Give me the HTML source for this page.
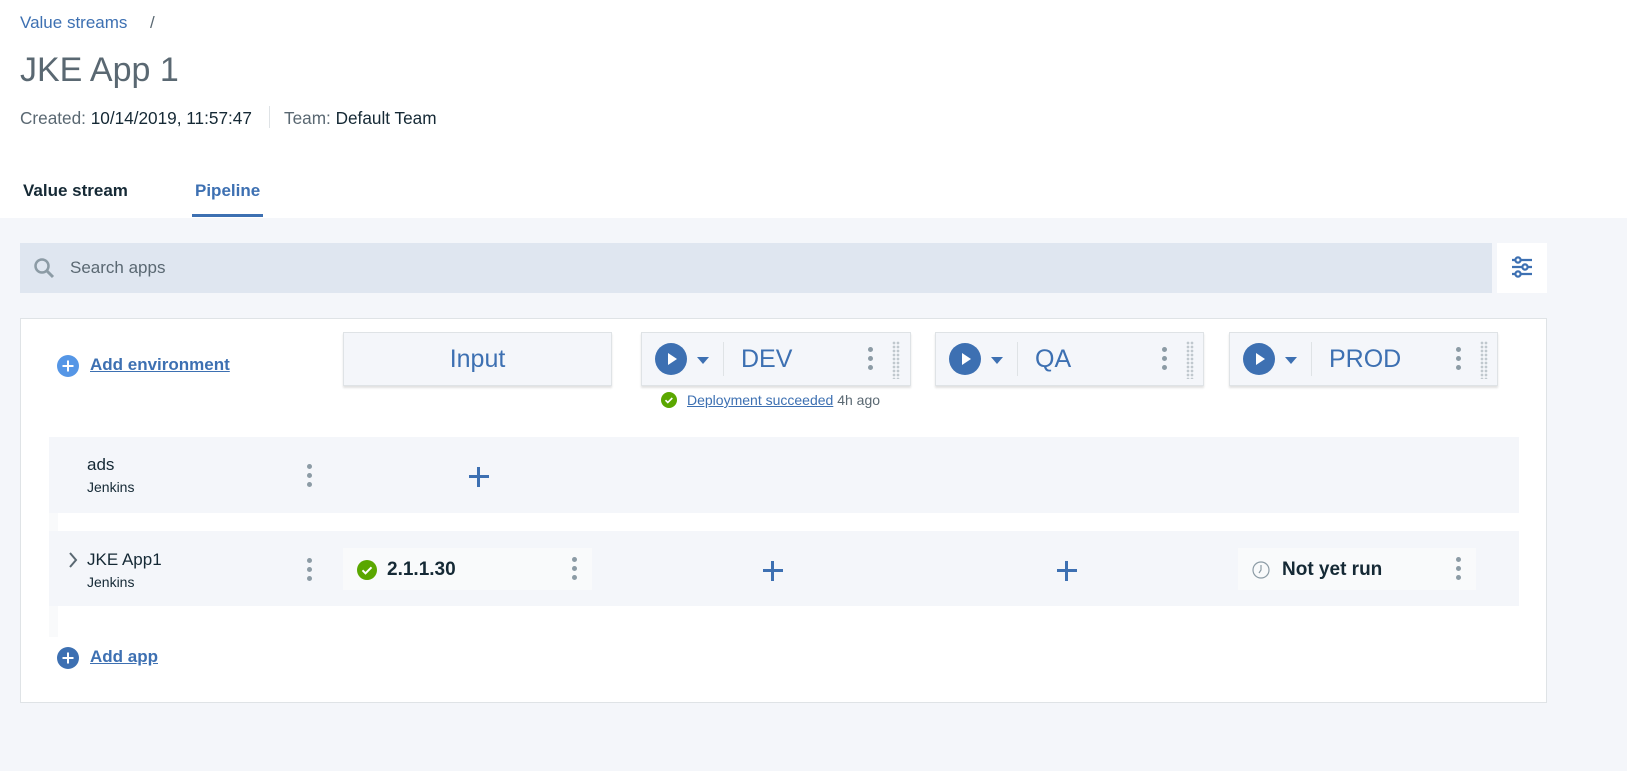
<!DOCTYPE html>
<html><head><meta charset="utf-8"><style>
*{box-sizing:border-box;margin:0;padding:0}
body{width:1627px;height:771px;background:#f4f6fa;font-family:"Liberation Sans",Arial,sans-serif;position:relative;overflow:hidden;color:#152935}
.abs{position:absolute}
#hdr{left:0;top:0;width:1627px;height:218px;background:#fff}
.blue{color:#3d70b2}
.card{position:absolute;background:#f4f6fa;border:1px solid #dfe3e6;box-shadow:0 2px 2px rgba(0,0,0,.12)}
.kebab{position:absolute;width:5px}
.kebab i{display:block;width:5px;height:5px;border-radius:50%;background:#8c9ba5;margin-bottom:4px}
.grip{position:absolute;width:8px;height:38px;background-image:radial-gradient(#c0c8ce 45%,transparent 50%);background-size:4px 4px}
.play{position:absolute;width:32px;height:32px;border-radius:50%;background:#3d70b2}
.play:after{content:"";position:absolute;left:13px;top:10px;border-left:9px solid #fff;border-top:6px solid transparent;border-bottom:6px solid transparent}
.caret{position:absolute;border-top:7px solid #3d70b2;border-left:6px solid transparent;border-right:6px solid transparent}
.sep{position:absolute;width:1px;height:34px;background:#dfe3e6}
.envname{position:absolute;font-size:25px;color:#3d70b2}
.plus{position:absolute;width:20px;height:20px}
.plus:before{content:"";position:absolute;left:8px;top:0;width:3px;height:20px;background:#3d70b2}
.plus:after{content:"";position:absolute;left:0;top:8px;width:20px;height:3px;background:#3d70b2}
.row{position:absolute;left:49px;width:1470px;background:#f4f6fa}
</style></head><body>
<div id="hdr" class="abs"></div>
<div class="abs blue" style="left:20px;top:13px;font-size:17px">Value streams</div>
<div class="abs" style="left:150px;top:13px;font-size:17px;color:#5a6872">/</div>
<div class="abs" style="left:20px;top:51px;font-size:34px;color:#5a6872">JKE App 1</div>
<div class="abs" style="left:20px;top:108px;font-size:17.2px;color:#5a6872">Created: <span style="color:#152935">10/14/2019, 11:57:47</span></div>
<div class="abs" style="left:269px;top:106px;width:1px;height:22px;background:#dfe3e6"></div>
<div class="abs" style="left:284px;top:108px;font-size:17.2px;color:#5a6872">Team: <span style="color:#152935">Default Team</span></div>
<div class="abs" style="left:23px;top:181px;font-size:17px;font-weight:bold;color:#152935">Value stream</div>
<div class="abs blue" style="left:195px;top:181px;font-size:17px;font-weight:bold">Pipeline</div>
<div class="abs" style="left:192px;top:214px;width:71px;height:3px;background:#3d70b2"></div>

<div class="abs" style="left:20px;top:243px;width:1472px;height:50px;background:#dfe6f0"></div>
<svg class="abs" style="left:33px;top:257px" width="24" height="24" viewBox="0 0 24 24"><circle cx="9" cy="9" r="6.5" fill="none" stroke="#8c9ba5" stroke-width="2.5"/><path d="M14 14l6 6" stroke="#8c9ba5" stroke-width="3"/></svg>
<div class="abs" style="left:70px;top:258px;font-size:17px;color:#5a6872">Search apps</div>
<div class="abs" style="left:1497px;top:243px;width:50px;height:50px;background:#fff"></div>
<svg class="abs" style="left:1511px;top:256px" width="22" height="22" viewBox="0 0 22 22" fill="none" stroke="#3d70b2" stroke-width="2.2"><path d="M1 4h20M1 11h20M1 18h20"/><circle cx="7" cy="4" r="2.6" fill="#fff"/><circle cx="14" cy="11" r="2.6" fill="#fff"/><circle cx="7" cy="18" r="2.6" fill="#fff"/></svg>

<div class="abs" style="left:20px;top:318px;width:1527px;height:385px;background:#fff;border:1px solid #dfe3e6"></div>
<svg class="abs" style="left:57px;top:355px" width="22" height="22" viewBox="0 0 22 22"><circle cx="11" cy="11" r="11" fill="#5596e6"/><path d="M11 5.5v11M5.5 11h11" stroke="#fff" stroke-width="2"/></svg>
<div class="abs blue" style="left:90px;top:355px;font-size:17px;font-weight:bold;text-decoration:underline">Add environment</div>

<div class="card" style="left:343px;top:332px;width:269px;height:54px"><div style="text-align:center;font-size:25px;color:#3d70b2;line-height:52px">Input</div></div>

<div class="card" style="left:641px;top:332px;width:270px;height:54px"><div class="play" style="left:13px;top:10px"></div><div class="caret" style="left:55px;top:24px"></div><div class="sep" style="left:81px;top:9px"></div><div class="envname" style="left:99px;top:12px">DEV</div><div class="kebab" style="left:226px;top:14px"><i></i><i></i><i></i></div><div class="grip" style="left:250px;top:8px"></div></div>
<div class="card" style="left:935px;top:332px;width:269px;height:54px"><div class="play" style="left:13px;top:10px"></div><div class="caret" style="left:55px;top:24px"></div><div class="sep" style="left:81px;top:9px"></div><div class="envname" style="left:99px;top:12px">QA</div><div class="kebab" style="left:226px;top:14px"><i></i><i></i><i></i></div><div class="grip" style="left:250px;top:8px"></div></div>
<div class="card" style="left:1229px;top:332px;width:269px;height:54px"><div class="play" style="left:13px;top:10px"></div><div class="caret" style="left:55px;top:24px"></div><div class="sep" style="left:81px;top:9px"></div><div class="envname" style="left:99px;top:12px">PROD</div><div class="kebab" style="left:226px;top:14px"><i></i><i></i><i></i></div><div class="grip" style="left:250px;top:8px"></div></div>

<svg class="abs" style="left:661px;top:392px" width="16" height="16" viewBox="0 0 16 16"><circle cx="8" cy="8" r="8" fill="#5aa700"/><path d="M4.5 8.2l2.3 2.3 4.5-4.5" stroke="#fff" stroke-width="1.6" fill="none"/></svg>
<div class="abs" style="left:687px;top:392px;font-size:14px;color:#5a6872"><span class="blue" style="text-decoration:underline">Deployment succeeded</span> 4h ago</div>

<div class="abs" style="left:49px;top:437px;width:9px;height:200px;background:#f9fafb"></div>
<div class="row" style="top:437px;height:76px"></div>
<div class="row" style="top:531px;height:75px"></div>
<div class="abs" style="left:87px;top:455px;font-size:17px">ads</div>
<div class="abs" style="left:87px;top:479px;font-size:14px">Jenkins</div>
<div class="kebab" style="left:307px;top:464px"><i></i><i></i><i></i></div>
<div class="plus" style="left:469px;top:467px"></div>

<svg class="abs" style="left:67px;top:551px" width="12" height="18" viewBox="0 0 12 18"><path d="M3 2l6 7-6 7" stroke="#5a6872" stroke-width="2" fill="none"/></svg>
<div class="abs" style="left:87px;top:550px;font-size:17px">JKE App1</div>
<div class="abs" style="left:87px;top:574px;font-size:14px">Jenkins</div>
<div class="kebab" style="left:307px;top:558px"><i></i><i></i><i></i></div>
<div class="abs" style="left:343px;top:548px;width:249px;height:42px;background:#f9fafb"></div>
<svg class="abs" style="left:357px;top:560px" width="20" height="20" viewBox="0 0 20 20"><circle cx="10" cy="10" r="10" fill="#5aa700"/><path d="M5.5 10.3l3 3 6-6" stroke="#fff" stroke-width="2" fill="none"/></svg>
<div class="abs" style="left:387px;top:559px;font-size:19px;font-weight:bold">2.1.1.30</div>
<div class="kebab" style="left:572px;top:557px"><i></i><i></i><i></i></div>
<div class="plus" style="left:763px;top:561px"></div>
<div class="plus" style="left:1057px;top:561px"></div>
<div class="abs" style="left:1238px;top:548px;width:238px;height:42px;background:#f9fafb"></div>
<svg class="abs" style="left:1252px;top:561px" width="18" height="18" viewBox="0 0 18 18"><circle cx="9" cy="9" r="8" fill="none" stroke="#8c9ba5" stroke-width="1.2"/><path d="M9 4v5l-2 3" stroke="#8c9ba5" stroke-width="1.2" fill="none"/></svg>
<div class="abs" style="left:1282px;top:559px;font-size:19px;font-weight:bold">Not yet run</div>
<div class="kebab" style="left:1456px;top:557px"><i></i><i></i><i></i></div>

<svg class="abs" style="left:57px;top:647px" width="22" height="22" viewBox="0 0 22 22"><circle cx="11" cy="11" r="11" fill="#3d70b2"/><path d="M11 5.5v11M5.5 11h11" stroke="#fff" stroke-width="2"/></svg>
<div class="abs blue" style="left:90px;top:647px;font-size:17px;font-weight:bold;text-decoration:underline">Add app</div>
</body></html>
